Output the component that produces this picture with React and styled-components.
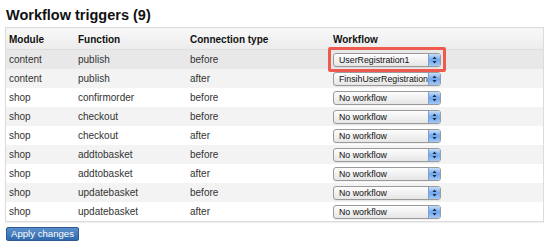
import React from 'react';
import styled, { createGlobalStyle } from 'styled-components';

const GlobalStyle = createGlobalStyle`
  html, body {
    margin: 0;
    padding: 0;
    background: #fff;
  }
  body {
    font-family: "Liberation Sans", Arial, sans-serif;
    color: #222;
  }
`;

const Page = styled.div`
  padding: 7px 7px 0 5px;
  width: 539px;
`;

const Title = styled.h2`
  margin: 0 0 3px 1px;
  font-size: 14.5px;
  font-weight: bold;
  color: #111;
  line-height: 17px;
`;

const Table = styled.table`
  width: 539px;
  border-collapse: collapse;
  border: 1px solid #dcdcdc;
  box-shadow: 0 1px 1px rgba(0, 0, 0, 0.06);
  font-size: 10px;
  table-layout: fixed;
`;

const HeadCell = styled.th`
  text-align: left;
  font-weight: bold;
  color: #111;
  height: 20px;
  padding: 1px 3px 0;
  background: linear-gradient(#f8f8f8, #ececec);
  border-bottom: 1px solid #dedede;
  width: ${p => p.$w || 'auto'};
`;

const Row = styled.tr`
  background: ${p => (p.$active ? '#e8e8e8' : p.$odd ? '#f3f3f3' : '#fff')};
`;

const Cell = styled.td`
  height: 19px;
  padding: 0 3px;
  color: #333;
  vertical-align: middle;
`;

const SelectWrap = styled.div`
  position: relative;
  display: inline-block;
  vertical-align: middle;
  ${p => p.$marked && `
    &::after {
      content: '';
      position: absolute;
      left: -5px;
      right: -5px;
      top: -6px;
      bottom: -5px;
      border: 3px solid #ee5b4e;
      border-radius: 2px;
      pointer-events: none;
    }
  `}
`;

const Select = styled.div`
  display: flex;
  align-items: stretch;
  width: 106px;
  height: 12px;
  border: 1px solid #9a9a9a;
  border-radius: 3px;
  background: linear-gradient(#fdfdfd, #e6e6e6);
  overflow: hidden;
  box-shadow: 0 1px 0 rgba(0, 0, 0, 0.05);
`;

const SelectLabel = styled.span`
  flex: 1;
  padding-left: 5px;
  font-size: 8.8px;
  line-height: 12px;
  color: #111;
  white-space: nowrap;
  overflow: hidden;
`;

const ArrowBox = styled.span`
  width: 11px;
  display: flex;
  align-items: center;
  justify-content: center;
  background: linear-gradient(#c7defa, #6fa8ee 50%, #a2c8f6);
  border-left: 1px solid #7f9fc8;
`;

const Button = styled.button`
  margin: 5px 0 0 1px;
  height: 14px;
  padding: 0 4px;
  border: 1px solid #2b5a92;
  border-radius: 2px;
  background: linear-gradient(#5b8fca, #2f6aae);
  color: #fff;
  font-family: "Liberation Sans", Arial, sans-serif;
  font-size: 9.6px;
  line-height: 12px;
  cursor: pointer;
`;

const Arrows = () => (
  <svg width="5" height="8" viewBox="0 0 5 8">
    <path d="M2.5 0.5 L4.5 3 L0.5 3 Z" fill="#1c2c44" />
    <path d="M2.5 7.5 L4.5 5 L0.5 5 Z" fill="#1c2c44" />
  </svg>
);

const rows = [
  ['content', 'publish', 'before', 'UserRegistration1'],
  ['content', 'publish', 'after', 'FinsihUserRegistration'],
  ['shop', 'confirmorder', 'before', 'No workflow'],
  ['shop', 'checkout', 'before', 'No workflow'],
  ['shop', 'checkout', 'after', 'No workflow'],
  ['shop', 'addtobasket', 'before', 'No workflow'],
  ['shop', 'addtobasket', 'after', 'No workflow'],
  ['shop', 'updatebasket', 'before', 'No workflow'],
  ['shop', 'updatebasket', 'after', 'No workflow'],
];

export default function App() {
  return (
    <Page>
      <GlobalStyle />
      <Title>Workflow triggers (9)</Title>
      <Table>
        <thead>
          <tr>
            <HeadCell $w="63px">Module</HeadCell>
            <HeadCell $w="106px">Function</HeadCell>
            <HeadCell $w="137px">Connection type</HeadCell>
            <HeadCell>Workflow</HeadCell>
          </tr>
        </thead>
        <tbody>
          {rows.map((r, i) => (
            <Row key={i} $active={i === 0} $odd={i % 2 === 1}>
              <Cell>{r[0]}</Cell>
              <Cell>{r[1]}</Cell>
              <Cell>{r[2]}</Cell>
              <Cell>
                <SelectWrap $marked={i === 0}>
                  <Select>
                    <SelectLabel>{r[3]}</SelectLabel>
                    <ArrowBox><Arrows /></ArrowBox>
                  </Select>
                </SelectWrap>
              </Cell>
            </Row>
          ))}
        </tbody>
      </Table>
      <Button>Apply changes</Button>
    </Page>
  );
}
